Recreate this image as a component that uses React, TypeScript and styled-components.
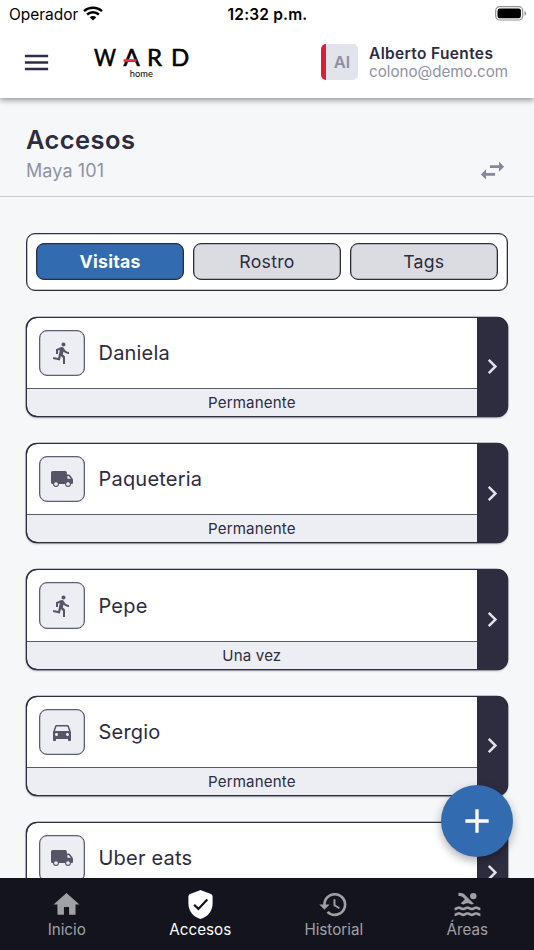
import React from "react";
import styled, { createGlobalStyle } from "styled-components";
import {
  MdMenu,
  MdDirectionsRun,
  MdDirectionsCar,
  MdHome,
  MdHistory,
  MdPool,
  MdSwapHoriz,
  MdChevronRight,
  MdAdd,
} from "react-icons/md";

const GlobalStyle = createGlobalStyle`
  * { box-sizing: border-box; }
  html, body { margin: 0; padding: 0; overflow: hidden; }
  body { font-family: Inter, "Liberation Sans", sans-serif; color: #2e2c3f; }
  button { font: inherit; color: inherit; }
`;

const Screen = styled.div`
  width: 534px;
  height: 950px;
  display: flex;
  flex-direction: column;
  position: relative;
  overflow: hidden;
  background: #f5f7f9;
`;

const Top = styled.header`
  height: 98px;
  flex: none;
  background: #fff;
  box-shadow: 0 2px 6px rgba(0, 0, 0, 0.42);
  z-index: 1;
`;

const StatusBar = styled.div`
  height: 28px;
  display: grid;
  grid-template-columns: 1fr auto 1fr;
  align-items: center;
  padding: 0 7px 2px 9px;
  color: #000;
  font-size: 15.5px;
`;

const Carrier = styled.div`
  display: flex;
  align-items: center;
  gap: 5px;
  line-height: 20px;
`;

const CarrierName = styled.span`
  padding-top: 3px;
  letter-spacing: -0.03px;
`;

const Clock = styled.div`
  padding-top: 2px;
  margin-left: -1px;
  font-weight: 600;
  letter-spacing: 0.17px;
`;

const BatteryIcon = styled.svg`
  justify-self: end;
`;

const AppBar = styled.div`
  height: 70px;
  display: flex;
  align-items: center;
  padding: 0 26px 2px 21px;
`;

const MenuButton = styled.button`
  display: flex;
  padding: 0;
  border: 0;
  background: none;
  color: #2e2c48;
`;

const Logo = styled.svg`
  margin-left: 41px;
  overflow: visible;
`;

const Profile = styled.div`
  margin-left: auto;
  display: flex;
  align-items: center;
  gap: 11px;
  width: 187px;
`;

const Avatar = styled.div`
  width: 37px;
  height: 36px;
  flex: none;
  display: flex;
  align-items: center;
  justify-content: center;
  border-left: 5px solid #d6203c;
  border-radius: 5px;
  background: #e1e4eb;
  color: #8e90a2;
  font-size: 16.5px;
  font-weight: 600;
`;

const UserText = styled.div`
  display: flex;
  flex-direction: column;
  padding-top: 2px;
  line-height: 18px;
  white-space: nowrap;
`;

const UserName = styled.span`
  font-size: 15.5px;
  font-weight: 600;
  letter-spacing: 0.35px;
`;

const UserMail = styled.span`
  color: #9092a4;
  font-size: 15.2px;
  letter-spacing: -0.02px;
`;

const Heading = styled.section`
  height: 99px;
  flex: none;
  display: flex;
  justify-content: space-between;
  align-items: flex-end;
  padding: 0 26px 10px;
  border-bottom: 1px solid #cccddb;
`;

const Title = styled.h1`
  margin: 0;
  font-size: 25.5px;
  line-height: 32px;
  font-weight: 600;
  letter-spacing: 0.4px;
`;

const Subtitle = styled.div`
  font-size: 18px;
  line-height: 30px;
  letter-spacing: 0.1px;
  color: #9092a2;
`;

const SwapButton = styled.button`
  display: flex;
  padding: 0;
  border: 0;
  background: none;
  color: #85879a;
`;

const Content = styled.main`
  flex: 1;
  min-height: 0;
  overflow: hidden;
  padding: 36px 26px 0;
`;

const Tabs = styled.div`
  display: grid;
  grid-template-columns: repeat(3, 1fr);
  gap: 8.5px;
  height: 57.6px;
  padding: 9px 9px 9.6px;
  border: 1px solid #2e2c3f;
  border-radius: 9px;
  background: #fff;
  box-shadow: inset 0 0 0 0.3px #2e2c3f;
`;

const Tab = styled.button<{ $active?: boolean }>`
  border: 1px solid #2e2c3f;
  border-radius: 8px;
  padding: 0;
  background: ${(p) => (p.$active ? "#326bb0" : "#dbdce2")};
  color: ${(p) => (p.$active ? "#fff" : "#2e2c3f")};
  font-size: 17.7px;
  font-weight: ${(p) => (p.$active ? 700 : 400)};
  letter-spacing: 0.25px;
  box-shadow: inset 0 0 0 0.3px #2e2c3f;
`;

const List = styled.div`
  display: flex;
  flex-direction: column;
  gap: 26px;
  margin-top: 26px;
`;

const Card = styled.article`
  flex: none;
  display: flex;
  height: 100.4px;
  border: 1px solid #2e2c3f;
  border-radius: 11px;
  background: #2e2c3f;
  overflow: hidden;
  box-shadow: 0 0 0 0.3px #2e2c3f, 0 1px 2px rgba(30, 30, 50, 0.35);
`;

const CardMain = styled.div`
  flex: 1;
  display: flex;
  flex-direction: column;
`;

const CardRow = styled.div`
  flex: 1;
  display: flex;
  align-items: center;
  gap: 13.5px;
  padding-left: 11.5px;
  background: #fff;
  border-radius: 10px 0 0 0;
  font-size: 20px;
  letter-spacing: 0.2px;
`;

const IconBox = styled.div`
  width: 46.5px;
  height: 46.5px;
  display: flex;
  align-items: center;
  justify-content: center;
  border: 1px solid #5e5c70;
  border-radius: 8px;
  background: #edeef3;
  color: #565568;
  font-size: 24px;
  box-shadow: inset 0 0 0 0.3px #5e5c70;
`;

const CardFooter = styled.div`
  height: 28px;
  border-top: 1px solid #5b5a69;
  border-radius: 0 0 0 10px;
  background: #edeef3;
  text-align: center;
  font-size: 15.1px;
  line-height: 27.4px;
  letter-spacing: 0.15px;
`;

const CardArrow = styled.div`
  width: 30.3px;
  display: flex;
  align-items: center;
  justify-content: center;
  color: #e1e4eb;
  font-size: 31px;
`;

const AddButton = styled.button`
  position: absolute;
  right: 21px;
  bottom: 93px;
  width: 72px;
  height: 72px;
  padding: 0;
  border: 0;
  border-radius: 50%;
  display: flex;
  align-items: center;
  justify-content: center;
  background: #326bb0;
  color: #fff;
  font-size: 40px;
  box-shadow: 0 4px 10px rgba(0, 0, 0, 0.32);
`;

const BottomNav = styled.nav`
  height: 72px;
  flex: none;
  display: grid;
  grid-template-columns: repeat(4, 1fr);
  background: #14141e;
  z-index: 1;
`;

const NavItem = styled.div<{ $active?: boolean }>`
  display: flex;
  flex-direction: column;
  align-items: center;
  padding-top: 11px;
  color: ${(p) => (p.$active ? "#fff" : "#a1a1a5")};
  font-size: 15.2px;
  line-height: 19px;

  svg {
    width: 31px;
    height: 31px;
  }
`;

const WifiIcon = () => (
  <svg width="20" height="15" viewBox="0 0 20 15" fill="none" stroke="#000" strokeWidth="2.5">
    <path d="M1 5.1C6 .6 14 .6 19 5.1" />
    <path d="M4.1 8.5C7.5 5.4 12.5 5.4 15.9 8.5" />
    <path d="M10 14.4 6.7 11.2C8.6 9.5 11.4 9.5 13.3 11.2Z" fill="#000" stroke="none" />
  </svg>
);

const WardLogo = () => (
  <Logo width="98" height="34" viewBox="0 0 98 34" fontFamily="Lato, sans-serif" fill="#000">
    <g fontSize="24" stroke="#000" strokeWidth="0.6">
      <text x="1" y="21" textLength="22" lengthAdjust="spacingAndGlyphs">W</text>
      <text x="30.5" y="21">A</text>
      <text x="54" y="21">R</text>
      <text x="78" y="21">D</text>
    </g>
    <rect x="30.5" y="14.2" width="13" height="2.6" fill="#ee3048" />
    <text x="36.8" y="31.6" fontSize="9.3" textLength="23" lengthAdjust="spacingAndGlyphs">home</text>
  </Logo>
);

const TruckIcon = () => (
  <svg width="24" height="24" viewBox="0 0 24 24" fill="currentColor">
    <path
      fillRule="evenodd"
      d="M2.7 4H15.2Q16.9 4 16.9 5.7V7.6H18.6Q19.5 7.6 20.1 8.3L22.3 11.2Q23 12 23 13V15.7Q23 17 21.9 17H20.7A2.7 2.7 0 0 1 15.4 17H8.6A2.7 2.7 0 0 1 3.3 17H2.5Q1 17 1 15.5V5.7Q1 4 2.7 4ZM17.4 9V11.8H20.9L19 9.4Q18.7 9 18.3 9Z"
    />
    <circle cx="6" cy="17" r="2.4" fill="#edeef3" stroke="currentColor" strokeWidth="1.1" />
    <circle cx="18" cy="17" r="2.4" fill="#edeef3" stroke="currentColor" strokeWidth="1.1" />
  </svg>
);

const ShieldIcon = () => (
  <svg viewBox="0 0 31 31">
    <path
      d="M14.4 1.4Q15.5.8 16.6 1.4L26 5.1Q27.6 5.8 27.6 7.5V14.5C27.6 21.8 22.8 28.2 15.5 30C8.2 28.2 3.4 21.8 3.4 14.5V7.5Q3.4 5.8 5 5.1Z"
      fill="currentColor"
    />
    <path d="m9.1 15.7 4.3 4.2 8.9-9.3" fill="none" stroke="#14141e" strokeWidth="2.2" />
  </svg>
);

const visits = [
  { name: "Daniela", kind: "Permanente", Icon: MdDirectionsRun },
  { name: "Paqueteria", kind: "Permanente", Icon: TruckIcon },
  { name: "Pepe", kind: "Una vez", Icon: MdDirectionsRun },
  { name: "Sergio", kind: "Permanente", Icon: MdDirectionsCar },
  { name: "Uber eats", kind: "Permanente", Icon: TruckIcon },
];

export default function App() {
  return (
    <Screen>
      <GlobalStyle />
      <Top>
        <StatusBar>
          <Carrier>
            <CarrierName>Operador</CarrierName>
            <WifiIcon />
          </Carrier>
          <Clock>12:32 p.m.</Clock>
          <BatteryIcon width="32" height="15" viewBox="0 0 32 15">
            <rect x=".7" y=".7" width="27" height="13.3" rx="4" fill="none" stroke="#929292" strokeWidth="1.2" />
            <rect x="2.5" y="2.5" width="23.4" height="9.7" rx="2.2" />
            <path d="M29.5 5v4.7q1.6-.6 1.6-2.3T29.5 5Z" fill="#929292" />
          </BatteryIcon>
        </StatusBar>
        <AppBar>
          <MenuButton aria-label="Menú">
            <MdMenu size={31} />
          </MenuButton>
          <WardLogo />
          <Profile>
            <Avatar>Al</Avatar>
            <UserText>
              <UserName>Alberto Fuentes</UserName>
              <UserMail>colono@demo.com</UserMail>
            </UserText>
          </Profile>
        </AppBar>
      </Top>
      <Heading>
        <div>
          <Title>Accesos</Title>
          <Subtitle>Maya 101</Subtitle>
        </div>
        <SwapButton aria-label="Cambiar">
          <MdSwapHoriz size={31} />
        </SwapButton>
      </Heading>
      <Content>
        <Tabs>
          <Tab $active>Visitas</Tab>
          <Tab>Rostro</Tab>
          <Tab>Tags</Tab>
        </Tabs>
        <List>
          {visits.map(({ name, kind, Icon }) => (
            <Card key={name}>
              <CardMain>
                <CardRow>
                  <IconBox>
                    <Icon />
                  </IconBox>
                  {name}
                </CardRow>
                <CardFooter>{kind}</CardFooter>
              </CardMain>
              <CardArrow>
                <MdChevronRight />
              </CardArrow>
            </Card>
          ))}
        </List>
      </Content>
      <BottomNav>
        <NavItem>
          <MdHome />
          Inicio
        </NavItem>
        <NavItem $active>
          <ShieldIcon />
          Accesos
        </NavItem>
        <NavItem>
          <MdHistory />
          Historial
        </NavItem>
        <NavItem>
          <MdPool />
          Áreas
        </NavItem>
      </BottomNav>
      <AddButton aria-label="Agregar">
        <MdAdd />
      </AddButton>
    </Screen>
  );
}
